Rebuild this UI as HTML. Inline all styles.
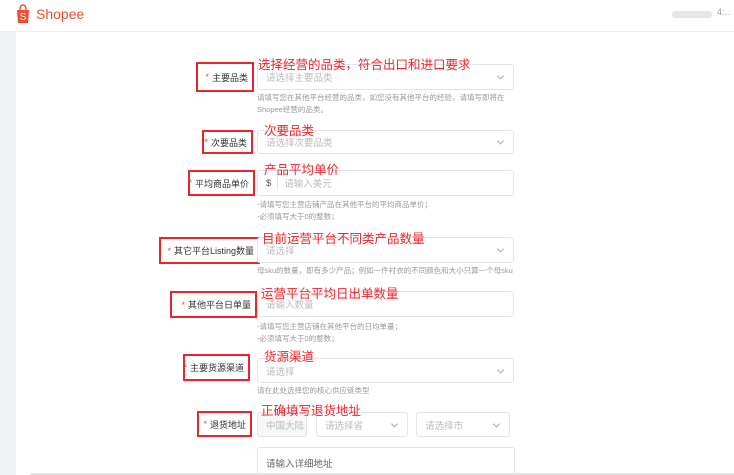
<!DOCTYPE html>
<html><head><meta charset="utf-8"><style>
*{box-sizing:border-box;margin:0;padding:0}
html,body{width:734px;height:475px;overflow:hidden}
body{background:#fff;font-family:"Liberation Sans","Noto Sans CJK SC",sans-serif;position:relative}
.hdr{position:absolute;left:0;top:0;width:734px;height:32px;background:#fff;border-bottom:1px solid #eee}
.side{position:absolute;left:0;top:32px;width:16px;height:443px;background:#f0f2f5}
.a{position:absolute}
.box{position:absolute;border:2px solid #e8262a;font-size:9px;color:#333;display:flex;align-items:center;justify-content:flex-end;padding-right:4px;white-space:nowrap}
.box b{color:#ee4d2d;font-weight:normal;margin-right:3px}
.in{position:absolute;border:1px solid #e5e5e5;border-radius:3px;background:#fff;font-size:9.5px;color:#bbb;display:flex;align-items:center;padding-left:8px;white-space:nowrap}
.in i{position:absolute;right:10px;top:50%;width:5px;height:5px;border-right:1px solid #aaa;border-bottom:1px solid #aaa;transform:translateY(-70%) rotate(45deg)}
.ann{position:absolute;color:#f0242a;font-size:12.5px;line-height:15px;white-space:nowrap}
.help{position:absolute;font-size:7.5px;color:#999;line-height:12px;white-space:nowrap}
</style></head><body>
<div class="hdr">
 <svg class="a" style="left:16px;top:4px" width="14" height="20" viewBox="0 0 14 20"><path d="M4 6 Q4 1 7 1 Q10 1 10 6" fill="none" stroke="#ee4d2d" stroke-width="1.4"/><path d="M1 6 H13 L12 19 H2 Z" fill="#ee4d2d"/><text x="7" y="16" font-size="10" fill="#fff" text-anchor="middle" font-family="Liberation Sans">S</text></svg>
 <div class="a" style="left:36px;top:6px;font-size:14px;color:#ee4d2d">Shopee</div>
 <div class="a" style="left:672px;top:11px;width:40px;height:7px;background:#e6e6e6;border-radius:3px"></div>
 <div class="a" style="left:717px;top:7px;font-size:9px;color:#999">4:..</div>
</div>
<div class="side"></div>

<div class="box" style="left:196px;top:62px;width:58px;height:30px"><b>*</b>主要品类</div>
<div class="in" style="left:257px;top:64px;width:257px;height:26px">请选择主要品类<i></i></div>
<div class="ann" style="left:258px;top:58px">选择经营的品类，符合出口和进口要求</div>
<div class="help" style="left:257px;top:92px">请填写您在其他平台经营的品类，如您没有其他平台的经验，请填写即将在<br>Shopee经营的品类。</div>

<div class="box" style="left:202px;top:130px;width:51px;height:24px"><b>*</b>次要品类</div>
<div class="in" style="left:257px;top:130px;width:257px;height:24px">请选择次要品类<i></i></div>
<div class="ann" style="left:264px;top:124px">次要品类</div>

<div class="box" style="left:188px;top:170px;width:67px;height:26px"><b>*</b>平均商品单价</div>
<div class="in" style="left:257px;top:170px;width:257px;height:26px;color:#555">$<span style="border-left:1px solid #e5e5e5;margin-left:6px;padding-left:6px;color:#bbb">请输入美元</span></div>
<div class="ann" style="left:264px;top:163px">产品平均单价</div>
<div class="help" style="left:257px;top:199px">-请填写您主营店铺产品在其他平台的平均商品单价；<br>-必须填写大于0的整数；</div>

<div class="box" style="left:159px;top:237px;width:101px;height:27px"><b>*</b>其它平台Listing数量</div>
<div class="in" style="left:257px;top:237px;width:257px;height:26px">请选择<i></i></div>
<div class="ann" style="left:262px;top:232px">目前运营平台不同类产品数量</div>
<div class="help" style="left:257px;top:265px">母sku的数量，即有多少产品；例如一件衬衣的不同颜色和大小只算一个母sku</div>

<div class="box" style="left:170px;top:291px;width:87px;height:27px"><b>*</b>其他平台日单量</div>
<div class="in" style="left:257px;top:291px;width:257px;height:26px">请输入数量</div>
<div class="ann" style="left:261px;top:287px">运营平台平均日出单数量</div>
<div class="help" style="left:257px;top:321px">-请填写您主营店铺在其他平台的日均单量；<br>-必须填写大于0的整数；</div>

<div class="box" style="left:183px;top:354px;width:67px;height:27px"><b>*</b>主要货源渠道</div>
<div class="in" style="left:257px;top:358px;width:257px;height:25px">请选择<i></i></div>
<div class="ann" style="left:264px;top:350px">货源渠道</div>
<div class="help" style="left:257px;top:385px">请在此处选择您的核心供应链类型</div>

<div class="box" style="left:197px;top:411px;width:55px;height:26px"><b>*</b>退货地址</div>
<div class="in" style="left:257px;top:412px;width:50px;height:25px;background:#f7f7f7">中国大陆</div>
<div class="in" style="left:316px;top:412px;width:92px;height:25px">请选择省<i></i></div>
<div class="in" style="left:416px;top:412px;width:94px;height:25px">请选择市<i></i></div>
<div class="ann" style="left:261px;top:404px">正确填写退货地址</div>
<div class="in" style="left:257px;top:447px;width:258px;height:26px;align-items:flex-start;padding-top:8px;color:#666;border-bottom:none;border-radius:3px 3px 0 0">请输入详细地址</div>
<div class="a" style="left:30px;top:473px;width:704px;height:2px;background:#e5e5e5"></div>
</body></html>
